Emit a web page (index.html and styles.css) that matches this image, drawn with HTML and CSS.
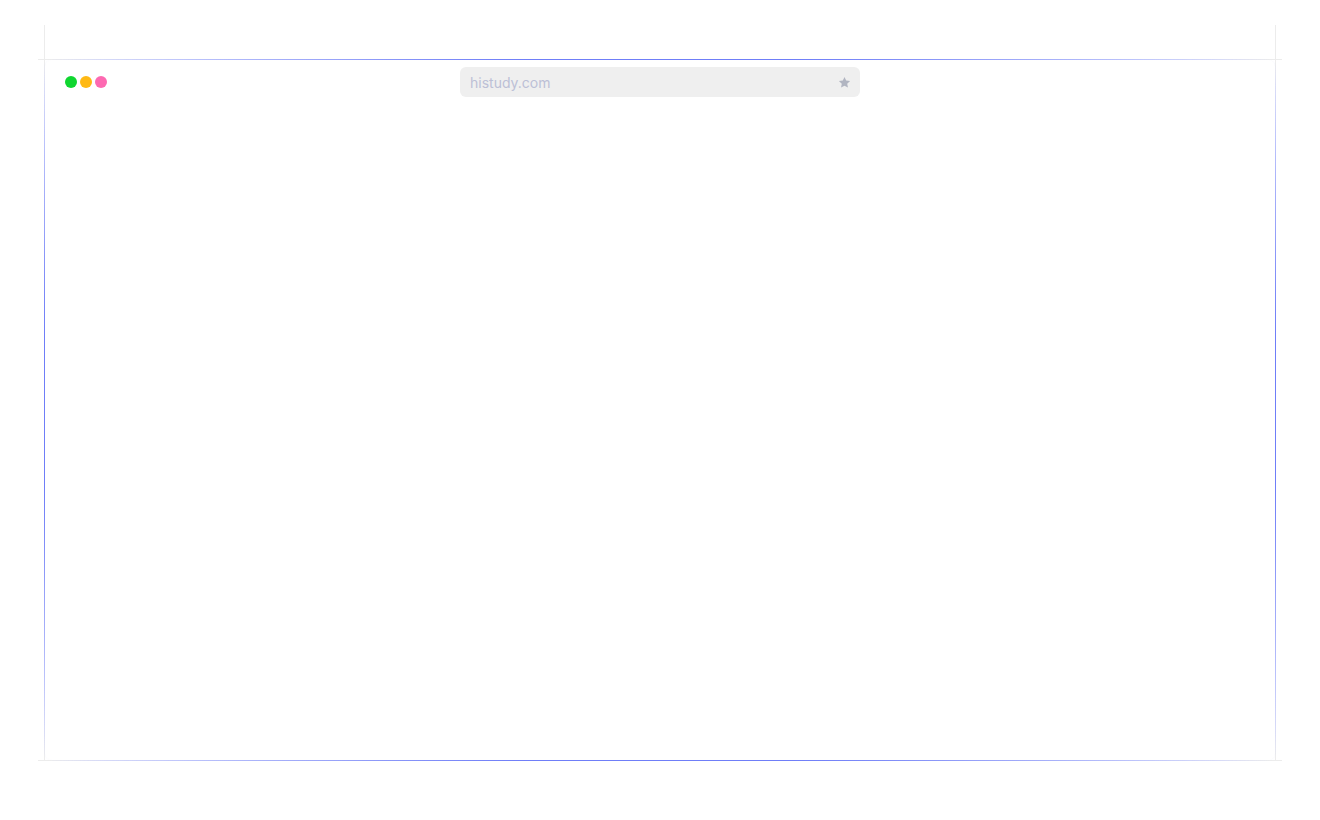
FILE: index.html
```html
<!DOCTYPE html>
<html lang="en">
<head>
<meta charset="utf-8">
<title>histudy.com</title>
<link rel="stylesheet" href="styles.css">
</head>
<body>
<div class="stage">
  <div class="frame">
    <span class="guide guide-top"></span>
    <span class="guide guide-bottom"></span>
    <span class="guide guide-left"></span>
    <span class="guide guide-right"></span>
    <div class="window">
      <header class="toolbar">
        <div class="dots">
          <span class="dot dot-green"></span>
          <span class="dot dot-orange"></span>
          <span class="dot dot-pink"></span>
        </div>
        <div class="address">
          <span class="url">histudy.com</span>
          <svg class="star" viewBox="0 0 24 24" width="13" height="13" aria-hidden="true">
            <path d="M12 1.8l3.1 6.6 7.2.9-5.3 5 1.4 7.1L12 17.9l-6.4 3.5 1.4-7.1-5.3-5 7.2-.9z" fill="#b1b5c1"/>
          </svg>
        </div>
        <div class="spacer"></div>
      </header>
      <main class="content"></main>
    </div>
  </div>
</div>
</body>
</html>
```
FILE: styles.css
```css
html {
  background: #ffffff;
}

body {
  margin: 0;
  padding: 0;
  font-family: "Inter", "Liberation Sans", sans-serif;
}

.stage {
  padding: 59px 44px 0 44px;
}

.frame {
  position: relative;
  isolation: isolate;
  width: 1232px;
  height: 702px;
}

.window {
  box-sizing: border-box;
  width: 100%;
  height: 100%;
  border: 1px solid transparent;
  border-radius: 8px;
  background:
    linear-gradient(#ffffff, #ffffff) padding-box,
    radial-gradient(closest-side, #6f7ef8 102%, #95a0f9 112%, #bcc3fb 126%, rgba(205, 210, 251, 0.7) 135%, rgba(236, 236, 240, 0) 141%) border-box;
  display: flex;
  flex-direction: column;
}

.guide {
  position: absolute;
  z-index: -1;
  background: #ececec;
  pointer-events: none;
}

.guide-top,
.guide-bottom {
  left: -6px;
  right: -6px;
  height: 1px;
}

.guide-top { top: 0; }
.guide-bottom { bottom: 0; }

.guide-left,
.guide-right {
  top: -34px;
  bottom: -35px;
  width: 1px;
}

.guide-left { left: 0; }
.guide-right { right: 0; }

.toolbar {
  display: grid;
  grid-template-columns: 1fr 400px 1fr;
  align-items: center;
  padding: 7px 20px 0 20px;
}

.dots {
  display: flex;
  gap: 3px;
}

.dot {
  width: 12px;
  height: 12px;
  border-radius: 50%;
}

.dot-green { background: #0fd630; }
.dot-orange { background: #ffb914; }
.dot-pink { background: #fd69b1; }

.address {
  height: 30px;
  box-sizing: border-box;
  background: #efefef;
  border-radius: 6px;
  display: flex;
  align-items: center;
  justify-content: space-between;
  padding: 0 9px 0 10px;
}

.url {
  font-size: 14px;
  color: #bcc0d6;
  letter-spacing: 0;
}

.star {
  display: block;
}

.content {
  flex: 1;
}
```
